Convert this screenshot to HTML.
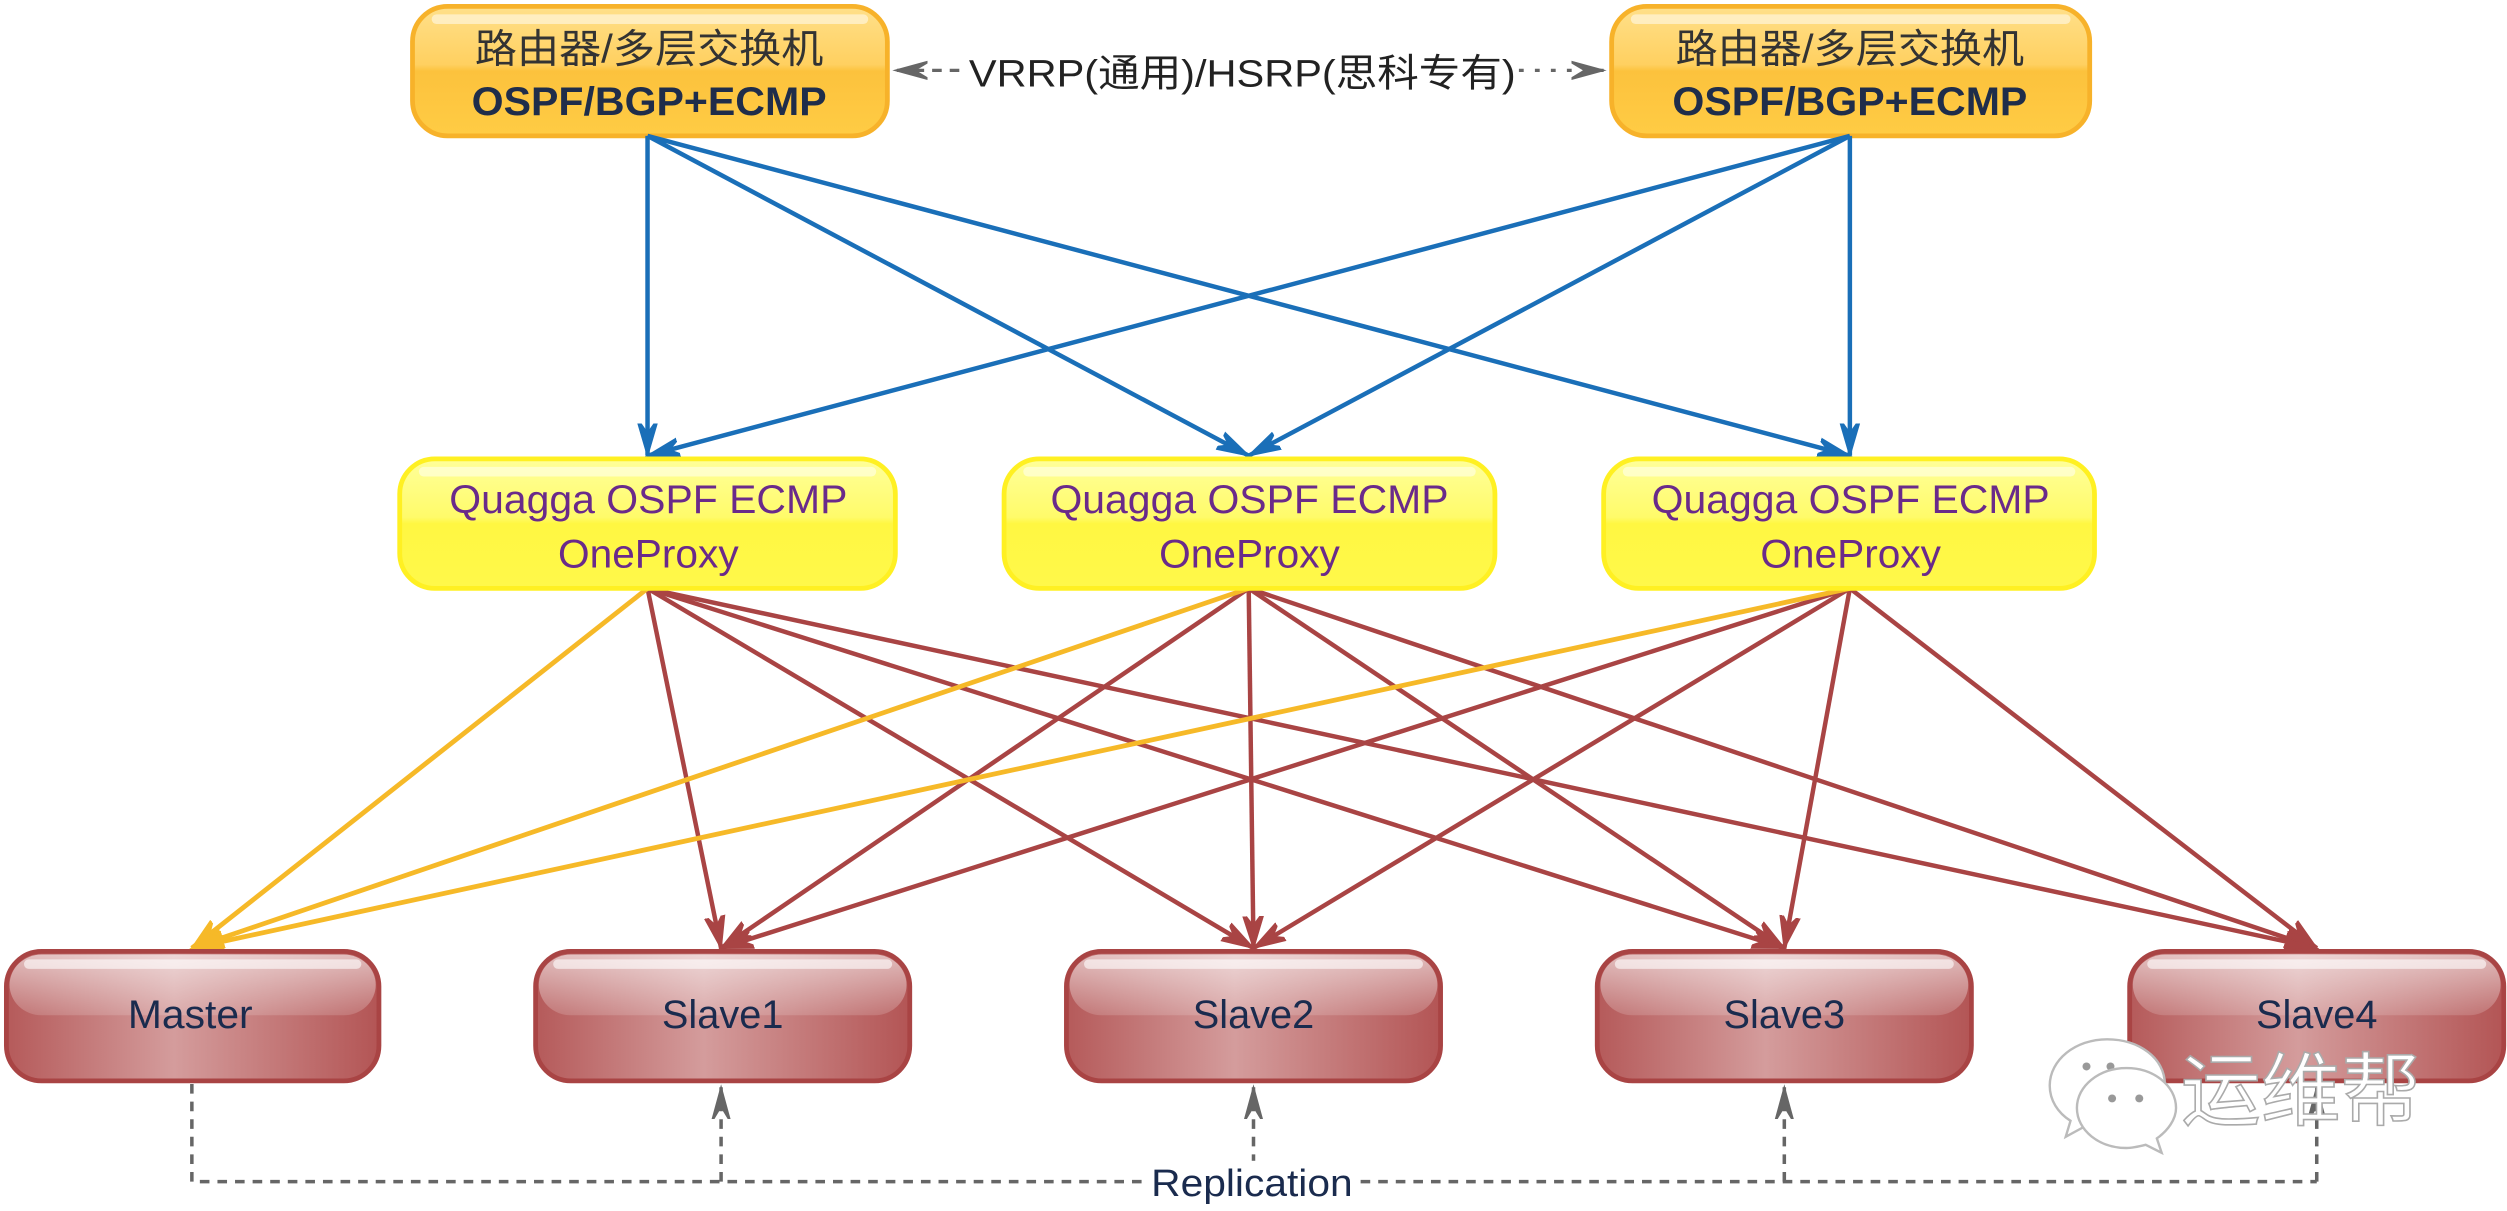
<!DOCTYPE html>
<html><head><meta charset="utf-8"><style>
html,body{margin:0;padding:0;background:#fff;width:2507px;height:1211px;overflow:hidden}
svg{display:block}
text{font-family:"Liberation Sans","Noto Sans CJK SC",sans-serif}
</style></head><body>
<svg width="2507" height="1211" viewBox="0 0 1568 757.4" preserveAspectRatio="none" xmlns="http://www.w3.org/2000/svg">
<defs>
<marker id="ab" markerUnits="userSpaceOnUse" markerWidth="40" markerHeight="40" refX="0" refY="0" viewBox="-20 -20 40 40" orient="auto">
<path d="M-24,-7 L0,0 L-24,7 L-14,0 Z" fill="#1a6fb8" stroke="#1a6fb8" stroke-width="1"/></marker>
<marker id="ar" markerUnits="userSpaceOnUse" markerWidth="40" markerHeight="40" refX="0" refY="0" viewBox="-20 -20 40 40" orient="auto">
<path d="M-24,-7.5 L0,0 L-24,7.5 L-14,0 Z" fill="#a94444" stroke="#a94444" stroke-width="1"/></marker>
<marker id="ay" markerUnits="userSpaceOnUse" markerWidth="40" markerHeight="40" refX="0" refY="0" viewBox="-20 -20 40 40" orient="auto">
<path d="M-24,-7.5 L0,0 L-24,7.5 L-14,0 Z" fill="#f6b928" stroke="#f6b928" stroke-width="1"/></marker>
<marker id="ag" markerUnits="userSpaceOnUse" markerWidth="40" markerHeight="40" refX="0" refY="0" viewBox="-20 -20 40 40" orient="auto">
<path d="M-22,-6 L0,0 L-22,6 L-12,0 Z" fill="#666" stroke="#666" stroke-width="1"/></marker>
<linearGradient id="go" x1="0" y1="0" x2="0" y2="1"><stop offset="0" stop-color="#ffe08a"/><stop offset=".45" stop-color="#ffd060"/><stop offset=".5" stop-color="#fcc23d"/><stop offset="1" stop-color="#ffcc44"/></linearGradient>
<linearGradient id="gy" x1="0" y1="0" x2="0" y2="1"><stop offset="0" stop-color="#ffff9a"/><stop offset=".45" stop-color="#fffb6a"/><stop offset=".5" stop-color="#fff742"/><stop offset="1" stop-color="#fff84a"/></linearGradient>
<linearGradient id="gr" x1="0" y1="0" x2="1" y2="0"><stop offset="0" stop-color="#b55a5a"/><stop offset=".45" stop-color="#d49c9c"/><stop offset="1" stop-color="#b35555"/></linearGradient>
<linearGradient id="grt" x1="0" y1="0" x2="0" y2="1"><stop offset="0" stop-color="#fff" stop-opacity=".6"/><stop offset="1" stop-color="#fff" stop-opacity=".15"/></linearGradient>
</defs>

<!-- top boxes -->
<g>
<rect x="258" y="4" width="297" height="81" rx="22" fill="url(#go)" stroke="#f7b22a" stroke-width="3"/>
<rect x="270" y="9" width="273" height="6" rx="3" fill="#fff" opacity=".5"/>
<text x="297" y="39" font-size="25" fill="#333" textLength="218" lengthAdjust="spacingAndGlyphs">路由器/多层交换机</text>
<text x="295" y="72" font-size="25" fill="#1f2d4a" font-weight="bold" textLength="222" lengthAdjust="spacingAndGlyphs">OSPF/BGP+ECMP</text>
<rect x="1008" y="4" width="299" height="81" rx="22" fill="url(#go)" stroke="#f7b22a" stroke-width="3"/>
<rect x="1020" y="9" width="275" height="6" rx="3" fill="#fff" opacity=".5"/>
<text x="1048" y="39" font-size="25" fill="#333" textLength="218" lengthAdjust="spacingAndGlyphs">路由器/多层交换机</text>
<text x="1046" y="72" font-size="25" fill="#1f2d4a" font-weight="bold" textLength="222" lengthAdjust="spacingAndGlyphs">OSPF/BGP+ECMP</text>
</g>
<line x1="600" y1="44" x2="560" y2="44" stroke="#666" stroke-width="2" stroke-dasharray="6,5" marker-end="url(#ag)"/>
<line x1="950" y1="44" x2="1003" y2="44" stroke="#666" stroke-width="2" stroke-dasharray="3,7" marker-end="url(#ag)"/>
<text x="606" y="54" font-size="24" fill="#222" textLength="342" lengthAdjust="spacingAndGlyphs">VRRP(通用)/HSRP(思科专有)</text>

<!-- blue -->
<g stroke="#1a6fb8" stroke-width="2.8" fill="none">
<line x1="405" y1="85" x2="405" y2="285" marker-end="url(#ab)"/>
<line x1="405" y1="85" x2="781" y2="285" marker-end="url(#ab)"/>
<line x1="405" y1="85" x2="1157" y2="285" marker-end="url(#ab)"/>
<line x1="1157" y1="85" x2="405" y2="285" marker-end="url(#ab)"/>
<line x1="1157" y1="85" x2="781" y2="285" marker-end="url(#ab)"/>
<line x1="1157" y1="85" x2="1157" y2="285" marker-end="url(#ab)"/>
</g>

<!-- red -->
<g stroke="#a94444" stroke-width="2.8" fill="none">
<line x1="405" y1="368" x2="451" y2="593" marker-end="url(#ar)"/>
<line x1="405" y1="368" x2="784" y2="593" marker-end="url(#ar)"/>
<line x1="405" y1="368" x2="1116" y2="593" marker-end="url(#ar)"/>
<line x1="405" y1="368" x2="1449" y2="593" marker-end="url(#ar)"/>
<line x1="781" y1="368" x2="451" y2="593" marker-end="url(#ar)"/>
<line x1="781" y1="368" x2="784" y2="593" marker-end="url(#ar)"/>
<line x1="781" y1="368" x2="1116" y2="593" marker-end="url(#ar)"/>
<line x1="781" y1="368" x2="1449" y2="593" marker-end="url(#ar)"/>
<line x1="1157" y1="368" x2="451" y2="593" marker-end="url(#ar)"/>
<line x1="1157" y1="368" x2="784" y2="593" marker-end="url(#ar)"/>
<line x1="1157" y1="368" x2="1116" y2="593" marker-end="url(#ar)"/>
<line x1="1157" y1="368" x2="1449" y2="593" marker-end="url(#ar)"/>
</g>
<g stroke="#f6b928" stroke-width="3" fill="none">
<line x1="405" y1="368" x2="120" y2="593" marker-end="url(#ay)"/>
<line x1="781" y1="368" x2="120" y2="593" marker-end="url(#ay)"/>
<line x1="1157" y1="368" x2="120" y2="593" marker-end="url(#ay)"/>
</g>

<!-- quagga boxes -->
<g font-size="25" fill="#6a2a8a">
<rect x="250" y="287" width="310" height="81" rx="22" fill="url(#gy)" stroke="#fff022" stroke-width="3"/>
<rect x="262" y="292" width="286" height="6" rx="3" fill="#fff" opacity=".5"/>
<text x="281" y="321" fill="#6a2a8a" textLength="249" lengthAdjust="spacingAndGlyphs">Quagga OSPF ECMP</text><text x="349" y="355" fill="#6a2a8a" textLength="113" lengthAdjust="spacingAndGlyphs">OneProxy</text>
<rect x="628" y="287" width="307" height="81" rx="22" fill="url(#gy)" stroke="#fff022" stroke-width="3"/>
<rect x="640" y="292" width="283" height="6" rx="3" fill="#fff" opacity=".5"/>
<text x="657" y="321" fill="#6a2a8a" textLength="249" lengthAdjust="spacingAndGlyphs">Quagga OSPF ECMP</text><text x="725" y="355" fill="#6a2a8a" textLength="113" lengthAdjust="spacingAndGlyphs">OneProxy</text>
<rect x="1003" y="287" width="307" height="81" rx="22" fill="url(#gy)" stroke="#fff022" stroke-width="3"/>
<rect x="1015" y="292" width="283" height="6" rx="3" fill="#fff" opacity=".5"/>
<text x="1033" y="321" fill="#6a2a8a" textLength="249" lengthAdjust="spacingAndGlyphs">Quagga OSPF ECMP</text><text x="1101" y="355" fill="#6a2a8a" textLength="113" lengthAdjust="spacingAndGlyphs">OneProxy</text>
</g>

<!-- dashed replication -->
<g stroke="#666" stroke-width="2.2" fill="none" stroke-dasharray="6,5">
<polyline points="120,678 120,739 1449,739"/>
<line x1="451" y1="739" x2="451" y2="680" marker-end="url(#ag)"/>
<line x1="784" y1="739" x2="784" y2="680" marker-end="url(#ag)"/>
<line x1="1116" y1="739" x2="1116" y2="680" marker-end="url(#ag)"/>
<line x1="1449" y1="739" x2="1449" y2="680" marker-end="url(#ag)"/>
</g>
<rect x="718" y="726" width="130" height="26" fill="#fff"/>
<text x="720" y="748" font-size="24" fill="#1a2b4e" textLength="126" lengthAdjust="spacingAndGlyphs">Replication</text>

<!-- bottom boxes -->
<g font-size="25">
<g><rect x="4" y="595" width="233" height="81" rx="22" fill="url(#gr)" stroke="#a94444" stroke-width="3"/><rect x="6" y="597" width="229" height="38" rx="20" fill="url(#grt)"/><rect x="15" y="600" width="211" height="6" rx="3" fill="#fff" opacity=".6"/><text x="80" y="643" fill="#1a2b4e" textLength="78" lengthAdjust="spacingAndGlyphs">Master</text></g>
<g><rect x="335" y="595" width="234" height="81" rx="22" fill="url(#gr)" stroke="#a94444" stroke-width="3"/><rect x="337" y="597" width="230" height="38" rx="20" fill="url(#grt)"/><rect x="346" y="600" width="212" height="6" rx="3" fill="#fff" opacity=".6"/><text x="414" y="643" fill="#1a2b4e" textLength="76" lengthAdjust="spacingAndGlyphs">Slave1</text></g>
<g><rect x="667" y="595" width="234" height="81" rx="22" fill="url(#gr)" stroke="#a94444" stroke-width="3"/><rect x="669" y="597" width="230" height="38" rx="20" fill="url(#grt)"/><rect x="678" y="600" width="212" height="6" rx="3" fill="#fff" opacity=".6"/><text x="746" y="643" fill="#1a2b4e" textLength="76" lengthAdjust="spacingAndGlyphs">Slave2</text></g>
<g><rect x="999" y="595" width="234" height="81" rx="22" fill="url(#gr)" stroke="#a94444" stroke-width="3"/><rect x="1001" y="597" width="230" height="38" rx="20" fill="url(#grt)"/><rect x="1010" y="600" width="212" height="6" rx="3" fill="#fff" opacity=".6"/><text x="1078" y="643" fill="#1a2b4e" textLength="76" lengthAdjust="spacingAndGlyphs">Slave3</text></g>
<g><rect x="1332" y="595" width="234" height="81" rx="22" fill="url(#gr)" stroke="#a94444" stroke-width="3"/><rect x="1334" y="597" width="230" height="38" rx="20" fill="url(#grt)"/><rect x="1343" y="600" width="212" height="6" rx="3" fill="#fff" opacity=".6"/><text x="1411" y="643" fill="#1a2b4e" textLength="76" lengthAdjust="spacingAndGlyphs">Slave4</text></g>
</g>

<!-- watermark -->
<g stroke="#bbb" stroke-width="1.5" fill="#fff">
<path d="M1318,650 c-20,0 -36,13 -36,29 c0,9 5,17 13,22 l-3,10 l11,-6 c5,1 10,2 15,2 c20,0 36,-13 36,-29 c0,-16 -16,-28 -36,-28z"/>
<circle cx="1305" cy="667" r="2.5" fill="#999" stroke="none"/><circle cx="1320" cy="667" r="2.5" fill="#999" stroke="none"/>
<path d="M1330,668 c-17,0 -31,11 -31,25 c0,14 14,25 31,25 c4,0 8,-1 12,-2 l10,5 l-3,-9 c7,-5 12,-12 12,-19 c0,-14 -14,-25 -31,-25z"/>
<circle cx="1321" cy="687" r="2.5" fill="#999" stroke="none"/><circle cx="1338" cy="687" r="2.5" fill="#999" stroke="none"/>
</g>
<text x="1364" y="700" font-size="50" fill="#fff" stroke="#aaa" stroke-width="1" font-family="'Noto Sans CJK SC',sans-serif">运维帮</text>
</svg>
</body></html>
